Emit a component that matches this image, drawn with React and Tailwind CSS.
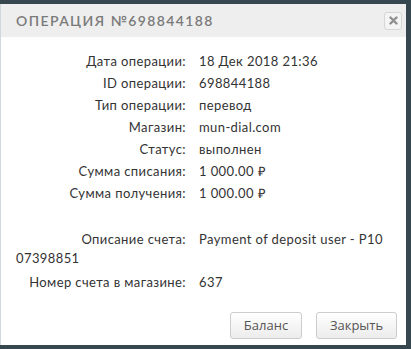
// Operation details modal (transfer receipt)

const rows = [
  ["Дата операции:", "18 Дек 2018 21:36"],
  ["ID операции:", "698844188"],
  ["Тип операции:", "перевод"],
  ["Магазин:", "mun-dial.com"],
  ["Статус:", "выполнен"],
  ["Сумма списания:", "1 000.00 ₽"],
  ["Сумма получения:", "1 000.00 ₽"],
];

function Row({ label, value, className = "" }) {
  return (
    <div className={"leading-[19px] mb-[3px] " + className}>
      <span className="inline-block w-[170px] text-right mr-[13px]">{label}</span>
      {value}
    </div>
  );
}

export default function App() {
  return (
    <div className="w-[411px] h-[349px] bg-[#37474f] pt-[4px] pr-[5px] overflow-hidden">
      <div className="h-[341px] bg-white border-l border-[#cfd8dc] flex flex-col font-['Lato',sans-serif]">
        {/* Header */}
        <div className="h-[33px] bg-[#eeeeee] flex items-center justify-between pl-[15px] pr-[4px]">
          <h3 className="text-[14px] font-semibold tracking-[1.4px] text-[#7a7a7a] font-['Lato',sans-serif]">
            ОПЕРАЦИЯ №698844188
          </h3>
          <button className="w-[18px] h-[18px] rounded-[3px] border border-[#d6d6d6] bg-[#f4f4f4] flex items-center justify-center">
            <svg width="9" height="9" viewBox="0 0 9 9">
              <path d="M1.5 1.5 L7.5 7.5 M7.5 1.5 L1.5 7.5" stroke="#8f8f8f" strokeWidth="2.4" strokeLinecap="round" />
            </svg>
          </button>
        </div>

        {/* Body */}
        <div className="pl-[15px] pr-[20px] pt-[15px] text-[13px] tracking-[0.4px] text-[#333]">
          {rows.map(([l, v]) => (
            <Row key={l} label={l} value={v} />
          ))}
          <Row label="Описание счета:" value="Payment of deposit user - P1007398851" className="mt-[27px] break-all" />
          <Row label="Номер счета в магазине:" value="637" className="mt-[5px]" />
        </div>

        {/* Footer */}
        <div className="mt-auto flex justify-end gap-[14px] pr-[9px] pb-[6px] font-['Open_Sans',sans-serif] text-[13px] text-[#555]">
          <button className="w-[72px] h-[27px] rounded-[3px] border border-[#cccccc] bg-gradient-to-b from-white to-[#ececec]">
            Баланс
          </button>
          <button className="w-[81px] h-[27px] rounded-[3px] border border-[#cccccc] bg-gradient-to-b from-white to-[#ececec]">
            Закрыть
          </button>
        </div>
      </div>
    </div>
  );
}
